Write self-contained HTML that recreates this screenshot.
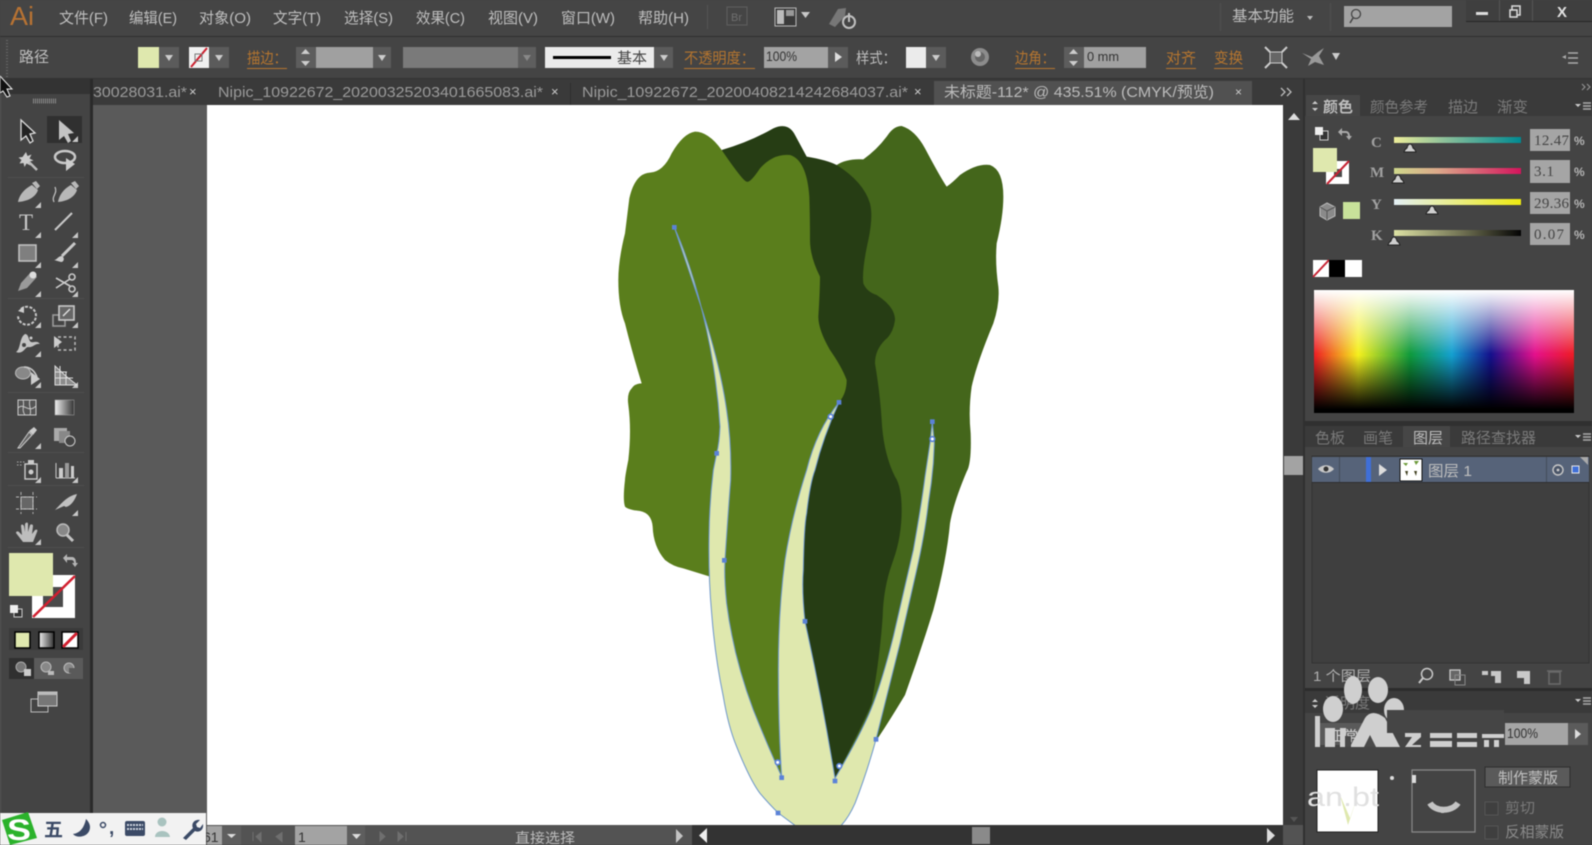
<!DOCTYPE html>
<html><head><meta charset="utf-8"><style>
html,body{margin:0;padding:0;background:#444;width:1592px;height:845px;overflow:hidden}
svg{display:block;filter:blur(.6px)}
text{font-family:"Liberation Sans","Noto Sans CJK SC",sans-serif}
.s{font-family:"Liberation Serif","Noto Serif CJK SC",serif}
.o{fill:#b5752f;font-size:15px}
.m{fill:#bfbfbf;font-size:15px}
.t{fill:#b4b4b4;font-size:15px}
.d{fill:#7a7a7a;font-size:15px}
.ic{fill:#c8c8c8}
.st{fill:none;stroke:#c8c8c8;stroke-width:1.6}
</style></head><body>
<svg width="1592" height="845" viewBox="0 0 1592 845" xmlns="http://www.w3.org/2000/svg">
<defs>
<linearGradient id="gc"><stop offset="0" stop-color="#eeee9a"/><stop offset=".4" stop-color="#8cc09a"/><stop offset="1" stop-color="#008a92"/></linearGradient>
<linearGradient id="gm"><stop offset="0" stop-color="#cfd88c"/><stop offset=".35" stop-color="#dca88a"/><stop offset="1" stop-color="#d4145c"/></linearGradient>
<linearGradient id="gy"><stop offset="0" stop-color="#e4f0f6"/><stop offset="1" stop-color="#eeea10"/></linearGradient>
<linearGradient id="gk"><stop offset="0" stop-color="#dde2a4"/><stop offset=".55" stop-color="#6d6e50"/><stop offset="1" stop-color="#040404"/></linearGradient>
<linearGradient id="hue"><stop offset="0" stop-color="#ee1c24"/><stop offset=".17" stop-color="#f5f01e"/><stop offset=".37" stop-color="#0f9a3c"/><stop offset=".53" stop-color="#14a0d0"/><stop offset=".68" stop-color="#14108c"/><stop offset=".85" stop-color="#e4108c"/><stop offset="1" stop-color="#ee1c24"/></linearGradient>
<linearGradient id="wb" x2="0" y2="1"><stop offset="0" stop-color="#fff"/><stop offset=".52" stop-color="#fff" stop-opacity="0"/><stop offset=".53" stop-color="#000" stop-opacity="0"/><stop offset=".97" stop-color="#000"/><stop offset="1" stop-color="#000"/></linearGradient>
<linearGradient id="gg"><stop offset="0" stop-color="#eee"/><stop offset="1" stop-color="#333"/></linearGradient>
<clipPath id="cv"><rect x="207" y="105" width="1076" height="720"/></clipPath>
</defs>

<rect width="1592" height="845" fill="#444"/>

<!-- menu bar -->
<rect width="1592" height="36" fill="#454545"/>
<rect y="36" width="1592" height="1" fill="#2f2f2f"/>
<text x="10" y="25" font-size="26" fill="#b87333" textLength="24" lengthAdjust="spacingAndGlyphs">Ai</text>
<text class="m" x="59" y="23" textLength="49" lengthAdjust="spacingAndGlyphs">文件(F)</text>
<text class="m" x="129" y="23" textLength="48" lengthAdjust="spacingAndGlyphs">编辑(E)</text>
<text class="m" x="199" y="23" textLength="52" lengthAdjust="spacingAndGlyphs">对象(O)</text>
<text class="m" x="273" y="23" textLength="48" lengthAdjust="spacingAndGlyphs">文字(T)</text>
<text class="m" x="344" y="23" textLength="49" lengthAdjust="spacingAndGlyphs">选择(S)</text>
<text class="m" x="416" y="23" textLength="49" lengthAdjust="spacingAndGlyphs">效果(C)</text>
<text class="m" x="488" y="23" textLength="50" lengthAdjust="spacingAndGlyphs">视图(V)</text>
<text class="m" x="561" y="23" textLength="54" lengthAdjust="spacingAndGlyphs">窗口(W)</text>
<text class="m" x="638" y="23" textLength="51" lengthAdjust="spacingAndGlyphs">帮助(H)</text>
<rect x="707" y="5" width="1" height="24" fill="#555"/>
<rect x="727" y="7" width="20" height="18" fill="none" stroke="#5f5f5f"/>
<text x="731" y="21" font-size="11" fill="#6f6f6f">Br</text>
<rect x="775" y="8" width="21" height="18" fill="#3a3a3a" stroke="#bbb"/>
<rect x="777" y="10" width="7" height="14" fill="#bbb"/><rect x="786" y="10" width="8" height="6" fill="#999"/>
<path d="M801 12h9l-4.500 6z" fill="#c8c8c8"/>
<path d="M829 24 L838 9 L846 8 L845 16 L835 27z" fill="#777"/>
<circle cx="849" cy="22" r="6" fill="none" stroke="#c0c0c0" stroke-width="2"/><rect x="848" y="13" width="2" height="9" fill="#c0c0c0"/>
<rect x="1220" y="3" width="1" height="28" fill="#505050"/>
<text class="m" x="1232" y="21" textLength="62" lengthAdjust="spacingAndGlyphs">基本功能</text>
<path d="M1307 16h6l-3 4z" fill="#bbb"/>
<rect x="1330" y="3" width="1" height="28" fill="#505050"/>
<rect x="1344" y="6" width="108" height="21" fill="#a3a3a3"/>
<circle cx="1356" cy="14" r="4.500" fill="none" stroke="#444" stroke-width="1.300"/><path d="M1353 18l-3 5" stroke="#444" stroke-width="1.500"/>
<rect x="1466" y="0" width="126" height="21" fill="#3f3f3f"/>
<rect x="1466" y="21" width="126" height="1" fill="#262626"/>
<rect x="1499" y="0" width="1" height="21" fill="#555"/><rect x="1532" y="0" width="1" height="21" fill="#555"/>
<rect x="1476" y="12" width="12" height="3" fill="#ddd"/>
<rect x="1512" y="6" width="8" height="9" fill="none" stroke="#ddd" stroke-width="1.500"/><rect x="1510" y="10" width="7" height="7" fill="#3f3f3f" stroke="#ddd" stroke-width="1.500"/>
<text x="1557" y="17" font-size="15" fill="#e2e2e2" font-weight="bold">X</text>

<!-- control bar -->
<rect y="37" width="1592" height="42" fill="#444"/>
<rect y="78" width="1592" height="1" fill="#333"/>
<path d="M7 40V78" stroke="#666" stroke-width="2" stroke-dasharray="1 2"/>
<text class="m" x="19" y="62" textLength="30" lengthAdjust="spacingAndGlyphs">路径</text>
<rect x="138" y="47" width="21" height="21" fill="#dfe8ae"/>
<rect x="159" y="47" width="20" height="21" fill="#5b5b5b"/><path d="M165 55h8l-4 6z" fill="#ccc"/>
<rect x="189" y="47" width="20" height="21" fill="#f0f0f0"/><path d="M191 67L207 48" stroke="#cc1f2e" stroke-width="2"/>
<rect x="195" y="54" width="7" height="7" fill="none" stroke="#777"/>
<rect x="209" y="47" width="20" height="21" fill="#5b5b5b"/><path d="M215 55h8l-4 6z" fill="#ccc"/>
<text class="o" x="247" y="63" textLength="40" lengthAdjust="spacingAndGlyphs">描边：</text><rect x="247" y="68" width="40" height="1" fill="#b5752f"/>
<rect x="296" y="47" width="20" height="21" fill="#5d5d5d"/><path d="M301 54h9l-4.500-5zM301 61h9l-4.500 5z" fill="#ccc"/>
<rect x="316" y="47" width="57" height="21" fill="#a0a0a0"/>
<rect x="373" y="47" width="18" height="21" fill="#5b5b5b"/><path d="M378 55h8l-4 6z" fill="#ccc"/>
<rect x="403" y="47" width="133" height="21" fill="#7a7a7a"/><rect x="518" y="47" width="18" height="21" fill="#5e5e5e"/><path d="M523 55h8l-4 6z" fill="#888"/>
<rect x="545" y="47" width="109" height="21" fill="#ebebeb"/>
<rect x="553" y="56" width="58" height="3" fill="#000"/>
<text x="617" y="63" font-size="15" fill="#444" textLength="30" lengthAdjust="spacingAndGlyphs">基本</text>
<rect x="654" y="47" width="19" height="21" fill="#5b5b5b"/><path d="M660 55h8l-4 6z" fill="#ccc"/>
<text class="o" x="684" y="63" textLength="71" lengthAdjust="spacingAndGlyphs">不透明度：</text><rect x="684" y="68" width="71" height="1" fill="#b5752f"/>
<rect x="764" y="47" width="64" height="21" fill="#a3a3a3"/><text x="766" y="61" font-size="14" fill="#333" textLength="31" lengthAdjust="spacingAndGlyphs">100%</text>
<rect x="828" y="47" width="20" height="21" fill="#5b5b5b"/><path d="M835 52v10l7-5z" fill="#ddd"/>
<text class="m" x="856" y="63" textLength="40" lengthAdjust="spacingAndGlyphs">样式：</text>
<rect x="906" y="47" width="20" height="21" fill="#ebebeb"/><rect x="926" y="47" width="20" height="21" fill="#5b5b5b"/><path d="M932 55h8l-4 6z" fill="#ccc"/>
<circle cx="980" cy="57" r="9" fill="#8c8c8c"/><circle cx="980" cy="57" r="5" fill="#666"/><circle cx="978" cy="54" r="3" fill="#bbb"/>
<text class="o" x="1015" y="63" textLength="40" lengthAdjust="spacingAndGlyphs">边角：</text><rect x="1015" y="68" width="40" height="1" fill="#b5752f"/>
<rect x="1064" y="47" width="20" height="21" fill="#5d5d5d"/><path d="M1069 54h9l-4.500-5zM1069 61h9l-4.500 5z" fill="#ccc"/>
<rect x="1084" y="47" width="62" height="21" fill="#a0a0a0"/><text x="1087" y="61" font-size="13" fill="#333" xml:space="preserve" textLength="32" lengthAdjust="spacingAndGlyphs">0 mm</text>
<text class="o" x="1166" y="63" textLength="30" lengthAdjust="spacingAndGlyphs">对齐</text><rect x="1166" y="68" width="30" height="1" fill="#b5752f"/>
<text class="o" x="1214" y="63" textLength="29" lengthAdjust="spacingAndGlyphs">变换</text><rect x="1214" y="68" width="29" height="1" fill="#b5752f"/>
<rect x="1270" y="52" width="12" height="11" fill="#666" stroke="#ccc"/><path d="M1265 47l5 5M1287 47l-5 5M1265 68l5-5M1287 68l-5-5" stroke="#ccc" stroke-width="2"/>
<path d="M1302 53l10 4 6-5 6-4-5 8 5 9-9-3-7 4 3-7z" fill="#999"/><path d="M1332 53h8l-4 7z" fill="#ccc"/>
<path d="M1568 53h10M1568 58h10M1568 63h10" stroke="#aaa" stroke-width="1.500"/><path d="M1562 57l4-2v4z" fill="#aaa"/>

<!-- tabs -->
<rect y="79" width="1592" height="26" fill="#3a3a3a"/>
<text x="93" y="97" font-size="15" fill="#9a9a9a" textLength="94" lengthAdjust="spacingAndGlyphs">30028031.ai*</text>
<text x="189" y="96" font-size="13" fill="#ccc">×</text>
<text x="218" y="97" font-size="15" fill="#9a9a9a" textLength="325" lengthAdjust="spacingAndGlyphs">Nipic_10922672_20200325203401665083.ai*</text>
<text x="551" y="96" font-size="13" fill="#ccc">×</text>
<rect x="570" y="83" width="1" height="22" fill="#2e2e2e"/>
<text x="582" y="97" font-size="15" fill="#9a9a9a" textLength="326" lengthAdjust="spacingAndGlyphs">Nipic_10922672_20200408214242684037.ai*</text>
<text x="914" y="96" font-size="13" fill="#ccc">×</text>
<rect x="934" y="81" width="318" height="24" fill="#515151"/>
<text x="944" y="97" font-size="15" fill="#bcbcbc" textLength="270" lengthAdjust="spacingAndGlyphs">未标题-112* @ 435.51% (CMYK/预览)</text>
<text x="1235" y="96" font-size="12" fill="#ccc">×</text>
<path d="M1281 88l4 4-4 4M1287 88l4 4-4 4" fill="none" stroke="#bbb" stroke-width="1.300"/>

<!-- toolbar -->
<rect x="0" y="79" width="90" height="15" fill="#333"/>
<rect x="0" y="94" width="90" height="731" fill="#444"/>
<rect x="90" y="79" width="3" height="746" fill="#2a2a2a"/>
<rect x="0" y="94" width="1" height="731" fill="#555"/>
<path d="M33 101h24" stroke="#8a8a8a" stroke-width="5" stroke-dasharray="1 1"/>
<rect x="47" y="116" width="35" height="27" fill="#303030"/>
<g fill="#4f4f4f"><rect x="8" y="177" width="76" height="1"/><rect x="8" y="298" width="76" height="1"/><rect x="8" y="392" width="76" height="1"/><rect x="8" y="452" width="76" height="1"/><rect x="8" y="485" width="76" height="1"/><rect x="8" y="547" width="76" height="1"/></g>
<g class="ic"><path d="M41 208h-6l6-6zM78 142h-6l6-6zM41 238h-6l6-6zM78 238h-6l6-6zM41 268h-6l6-6zM78 268h-6l6-6zM41 297h-6l6-6zM78 297h-6l6-6zM41 328h-6l6-6zM78 328h-6l6-6zM41 357h-6l6-6zM41 388h-6l6-6zM78 388h-6l6-6zM41 449h-6l6-6zM41 483h-6l6-6zM78 483h-6l6-6zM78 516h-6l6-6zM41 545h-6l6-6z"/></g>
<path d="M21 120V140L26 136L30 143L33 141L30 134L35 133Z" fill="#222" stroke="#ddd" stroke-width="1.300"/>
<path d="M59 120V140L64 136L68 143L71 141L68 134L74 133Z" fill="#c4c4c4"/>
<path d="M26 152l1.500 4 4-1.500-2 4 4 2-4 1 1 4-4-2-2 3.500-1-4-4 .5 2-3.500-3-2.500 4-.5z" fill="#ccc"/><path d="M29 162l8 8" stroke="#bbb" stroke-width="2.500"/>
<ellipse cx="65" cy="157" rx="10" ry="6" class="st" style="stroke-width:2.500"/><path d="M66 158v13l9-7z" fill="#ccc"/>
<path d="M18 202C20 192 28 187 32 185L38 190C36 196 30 201 18 202Z M32 183l4-2 4 5-3 3z" fill="#b8b8b8"/>
<path d="M58 202C60 192 67 187 71 185L77 190C75 196 69 201 58 202Z M71 183l4-2 4 5-3 3z" fill="#b8b8b8"/><path d="M54 202c-3-6 4-8 1-15" class="st" style="stroke-width:1.200"/>
<text class="s" x="19" y="230" font-size="23" fill="#c8c8c8">T</text>
<path d="M55 230L72 213" stroke="#c8c8c8" stroke-width="2"/>
<rect x="19" y="245" width="17" height="16" fill="#7f7f7f" stroke="#c4c4c4" stroke-width="1.500"/>
<path d="M75 243L62 256" stroke="#c8c8c8" stroke-width="3"/><path d="M54 260c3 0 4-4 8-4 3 2 2 6-1 6z" fill="#ccc"/>
<path d="M18 291l3-8 10-11 6 5-10 11z" fill="#9a9a9a"/><circle cx="33" cy="275" r="3.500" fill="#ddd"/>
<path d="M56 278l14 8M56 288l14-9" stroke="#ccc" stroke-width="1.600"/><circle cx="72" cy="277" r="3" class="st"/><circle cx="72" cy="289" r="3" class="st"/>
<path d="M21 309a9 9 0 1 1-3 7" class="st" style="stroke-width:2;stroke-dasharray:3 1.500"/><path d="M18 311l6-5v7z" fill="#ccc"/>
<rect x="53" y="315" width="12" height="11" fill="none" stroke="#9a9a9a" stroke-width="1.600"/><rect x="59" y="306" width="15" height="14" fill="#666" stroke="#c8c8c8" stroke-width="1.600"/><path d="M63 316l7-7" stroke="#ddd" stroke-width="1.500"/>
<path d="M16 352c5-3 3-14 9-18 4 0 3 6 6 8 3 1 6-2 9 2-5-1-7 4-12 3-3 0-5 8-12 5z" fill="#c4c4c4"/><circle cx="24" cy="345" r="2" fill="#444"/><circle cx="31" cy="338" r="1.500" fill="#ccc"/>
<rect x="58" y="337" width="17" height="13" fill="none" stroke="#bbb" stroke-width="1.500" stroke-dasharray="3 2.500"/><path d="M54 336v12l8-6z" fill="#ccc"/>
<ellipse cx="23" cy="373" rx="7.500" ry="6" fill="#888" stroke="#bbb"/><path d="M24 367c7 0 11 5 13 10" class="st"/><path d="M31 372v13l9-6z" fill="#ccc"/>
<path d="M55 366v19h22l-10-8z" fill="#8c8c8c" stroke="#ddd"/><path d="M55 372h12M55 378h18M60 366v19M66 372v13" stroke="#ddd"/>
<rect x="18" y="400" width="18" height="15" fill="#555" stroke="#ccc"/><path d="M18 408c6-6 10 6 18-2M23 400c2 5-2 10 2 15M30 400c-2 5 2 10 0 15" class="st" style="stroke-width:1"/>
<rect x="55" y="400" width="19" height="15" fill="url(#gg)" stroke="#aaa" stroke-width=".5"/>
<path d="M20 445l-2 3 2 0 12-13-3-3z" fill="#666" stroke="#ccc"/><path d="M29 431l5-4 3 3-4 5z" fill="#ccc"/>
<rect x="54" y="428" width="13" height="13" fill="#aaa"/><rect x="59" y="431" width="11" height="12" fill="#888"/><circle cx="70" cy="441" r="5" fill="#444" stroke="#ccc"/>
<rect x="25" y="464" width="12" height="15" fill="none" stroke="#ccc" stroke-width="1.400"/><circle cx="31" cy="472" r="2.500" fill="#ccc"/><rect x="28" y="460" width="6" height="4" fill="#ccc"/><path d="M17 462h8M17 465h6" stroke="#aaa" stroke-dasharray="1.500 1.500"/>
<path d="M56 478V463M56 478H75" stroke="#ccc"/><rect x="59" y="468" width="4" height="10" fill="#ccc"/><rect x="65" y="463" width="4" height="15" fill="#999"/><rect x="71" y="466" width="3" height="12" fill="#ccc"/>
<rect x="21" y="497" width="12" height="12" fill="#666" stroke="#ccc"/><path d="M16 497h21M16 509h21M21 492v22M33 492v22" stroke="#bbb" stroke-width=".9" stroke-dasharray="3 2"/>
<path d="M55 510c6-6 12-14 22-16-2 6-6 12-11 13l-2-1z" fill="#c0c0c0"/>
<path d="M23 542l-7-9c0-2 2-2 3-1l3 3-1-9c0-2 2-2 3 0l1 6v-8c1-2 3-2 3 0v8l2-7c1-1 3-1 3 1l-1 8 3-4c2-1 3 0 2 2l-4 10z" fill="#bdbdbd"/>
<circle cx="63" cy="530" r="6" fill="#888" stroke="#bbb" stroke-width="1.500"/><path d="M67 535l6 6" stroke="#c4c4c4" stroke-width="3"/>

<rect x="32" y="575" width="43" height="43" fill="#fff"/>
<rect x="43" y="587" width="20" height="20" fill="#4a4a4a"/>
<path d="M33 617L75 576" stroke="#d21f2f" stroke-width="2.500"/>
<rect x="9" y="553" width="44" height="43" fill="#dfe8ae"/>
<path d="M63 558l4-4v3h5c3 0 4 3 4 6h2l-3 4-3-4h2c0-2-1-3-3-3h-4v3z" fill="#b5b5b5"/>
<rect x="14" y="609" width="8" height="8" fill="#333" stroke="#ccc"/><rect x="10" y="605" width="8" height="8" fill="#eee"/>
<rect x="9" y="628" width="74" height="22" fill="#3a3a3a"/>
<rect x="15" y="632" width="15" height="16" fill="#dfe8ae" stroke="#000" stroke-width="1.500"/>
<rect x="39" y="632" width="15" height="16" fill="url(#gg)" stroke="#000" stroke-width="1.500"/>
<rect x="62" y="632" width="16" height="16" fill="#fff" stroke="#000" stroke-width="1.500"/><path d="M63 647L77 633" stroke="#d21f2f" stroke-width="3"/>
<rect x="9" y="658" width="25" height="21" fill="#303030"/><rect x="34" y="658" width="49" height="21" fill="#5a5a5a"/>
<circle cx="21" cy="667" r="5" fill="#777" stroke="#aaa"/><rect x="24" y="669" width="7" height="7" fill="#ccc"/>
<circle cx="46" cy="667" r="5" fill="#888" stroke="#bbb"/><rect x="48" y="671" width="6" height="4" fill="#bbb"/>
<circle cx="69" cy="668" r="5" fill="#888" stroke="#bbb"/><path d="M69 668h6v5h-6z" fill="#5a5a5a"/>
<rect x="31" y="699" width="17" height="13" fill="none" stroke="#bbb"/><rect x="38" y="692" width="19" height="14" fill="#777" stroke="#ccc"/><rect x="38" y="692" width="19" height="3" fill="#bbb"/>

<!-- canvas -->
<rect x="93" y="105" width="114" height="720" fill="#5a5a5a"/>
<rect x="207" y="105" width="1076" height="720" fill="#fff"/>
<g clip-path="url(#cv)"><g transform="translate(600 110) scale(.33333)">
<path fill="#44661b" d="M710 165Q740 145 790 148Q830 120 860 80Q880 48 905 48Q945 60 975 115Q1020 200 1040 230Q1055 220 1080 195Q1130 160 1170 165Q1210 180 1210 260Q1210 320 1190 400Q1185 460 1195 530Q1200 580 1180 640Q1130 760 1115 830Q1105 900 1112 970Q1115 1060 1100 1085Q1060 1180 1050 1240Q1040 1350 1000 1500Q960 1630 915 1755Q870 1830 830 1890L705 2005L700 600Z"/>
<path fill="#263d14" d="M365 120Q450 95 520 55Q565 35 585 75L620 140Q680 150 710 165Q790 215 810 280Q820 320 805 390Q785 480 790 520Q800 545 830 555Q885 590 885 630Q880 670 855 690Q825 720 825 760Q840 850 845 930Q850 1030 885 1100Q905 1130 905 1200Q905 1280 880 1350Q850 1430 848 1520Q840 1640 815 1780Q790 1840 705 2005L640 1780L580 1535L590 1200L500 500Z"/>
<path fill="#5a7e1c" d="M365 120Q325 65 285 65Q250 70 215 130Q190 185 150 188Q105 190 88 265Q80 330 75 370Q55 450 55 510Q55 590 75 640Q100 740 125 820Q105 820 95 835Q80 850 85 885Q95 960 85 1050Q75 1100 75 1110Q68 1170 75 1190Q85 1200 120 1203Q155 1210 158 1250Q160 1310 195 1350Q220 1370 250 1375L330 1400L395 1700L460 1900L545 2010L580 1780L575 1480L590 1300L630 1080L717 877Q740 850 740 810Q725 770 690 720Q655 660 655 620Q660 540 660 500Q630 440 630 390Q630 320 628 260Q620 150 570 135Q520 130 480 175Q450 220 440 215Q430 215 365 120Z"/>
<path fill="#dfe8ae" stroke="#6d97cc" stroke-width="3" stroke-linejoin="round" d="M223 352C280 480 345 700 360 950Q358 1000 350 1030L340 1080Q328 1180 327 1280Q325 1400 335 1510Q345 1640 370 1760Q385 1850 410 1910Q450 2010 480 2050Q510 2085 535 2109L590 2150L720 2150Q745 2125 765 2080Q800 1990 828 1888Q860 1760 900 1600Q925 1490 950 1380Q975 1270 985 1180Q995 1120 1000 1060L1003 1000L997 935L990 1000L975 1100Q965 1180 940 1320Q915 1430 880 1580Q850 1700 820 1780Q790 1860 705 2005Q665 1760 615 1535Q605 1440 610 1380Q612 1250 620 1210Q630 1120 645 1080Q670 980 717 877Q650 960 620 1080Q575 1220 555 1350Q535 1500 535 1680Q535 1850 545 2000Q500 1900 460 1800Q400 1640 380 1480Q372 1400 375 1350Q385 1200 392 1110Q395 1000 380 900Q360 760 300 580Q260 460 223 352Z"/>
<g fill="#5b82d8"><rect x="216" y="345" width="14" height="14"/><rect x="710" y="870" width="14" height="14"/><rect x="990" y="928" width="14" height="14"/><rect x="343" y="1023" width="14" height="14"/><rect x="366" y="1344" width="14" height="14"/><rect x="608" y="1527" width="14" height="14"/><rect x="538" y="1996" width="14" height="14"/><rect x="698" y="2006" width="14" height="14"/><rect x="821" y="1881" width="14" height="14"/><rect x="527" y="2102" width="14" height="14"/></g>
<g fill="#fff" stroke="#5b82d8" stroke-width="5"><circle cx="692" cy="920" r="7"/><circle cx="997" cy="987" r="7"/><circle cx="533" cy="1957" r="7"/><circle cx="718" cy="1968" r="7"/></g>
</g></g>

<!-- status bar -->
<rect x="206" y="825" width="486" height="20" fill="#535353"/>
<rect x="207" y="826" width="15" height="19" fill="#a3a3a3"/><text x="203" y="842" font-size="14" fill="#333">61</text>
<rect x="222" y="826" width="19" height="19" fill="#5e5e5e"/><path d="M227 834h9l-4.500 4z" fill="#ddd"/>
<path d="M253 832v9M256 836.500l5-4v9zM276 836.500l6-4v9z" fill="#6f6f6f" stroke="#6f6f6f"/>
<rect x="295" y="826" width="52" height="19" fill="#a3a3a3"/><text x="298" y="842" font-size="14" fill="#333">1</text>
<rect x="347" y="826" width="18" height="19" fill="#5e5e5e"/><path d="M352 834h9l-4.500 5z" fill="#ddd"/>
<path d="M380 832v9l5-4.500zM398 832v9l5-4.500zM406 832v9" fill="#6f6f6f" stroke="#6f6f6f"/>
<text x="515" y="843" font-size="14" fill="#bcbcbc" textLength="60" lengthAdjust="spacingAndGlyphs">直接选择</text>
<path d="M676 829v14l7-7z" fill="#c4c4c4"/>
<rect x="692" y="825" width="591" height="20" fill="#333"/>
<path d="M707 828v15l-8-7.500z" fill="#eee"/>
<rect x="972" y="827" width="18" height="17" fill="#8a8a8a"/>
<path d="M1267 828v15l8-7.500z" fill="#ddd"/>
<rect x="1283" y="825" width="22" height="20" fill="#535353"/>

<!-- v scrollbar -->
<rect x="1283" y="105" width="20" height="720" fill="#3a3a3a"/>
<rect x="1303" y="79" width="2" height="766" fill="#303030"/>
<path d="M1288 120h12l-6-7z" fill="#ddd"/>
<rect x="1284" y="456" width="19" height="19" fill="#a3a3a3"/>
<path d="M1290 817h8l-4 5z" fill="#555"/>

<!-- right panel -->
<rect x="1305" y="79" width="287" height="766" fill="#444"/>
<rect x="1305" y="79" width="287" height="37" fill="#3a3a3a"/>
<path d="M1582 84l3 3-3 3M1587 84l3 3-3 3" fill="none" stroke="#999"/>
<rect x="1306" y="95" width="54" height="21" fill="#464646"/>
<path d="M1312 104l3-3 3 3zM1312 108l3 3 3-3z" fill="#ccc"/>
<text x="1323" y="112" class="m" textLength="30" lengthAdjust="spacingAndGlyphs" font-weight="bold">颜色</text>
<text x="1370" y="112" class="d" textLength="58" lengthAdjust="spacingAndGlyphs">颜色参考</text>
<text x="1448" y="112" class="d" textLength="30" lengthAdjust="spacingAndGlyphs">描边</text>
<text x="1497" y="112" class="d" textLength="31" lengthAdjust="spacingAndGlyphs">渐变</text>
<path d="M1575 104h6l-3 3z" fill="#ccc"/><path d="M1583 103h8M1583 106h8M1583 109h8" stroke="#aaa" stroke-width="1.500"/>

<rect x="1320" y="131" width="8" height="9" fill="#333" stroke="#ccc"/><rect x="1315" y="127" width="8" height="8" fill="#eee"/>
<path d="M1338 132l4-4v3h4c2 0 4 2 4 5h2l-3 4-3-4h2c0-2-1-3-2-3h-4v3z" fill="#aaa"/>
<rect x="1326" y="161" width="23" height="23" fill="#fff"/><rect x="1334" y="169" width="8" height="8" fill="#4a4a4a"/>
<path d="M1327 184L1349 161" stroke="#c62333" stroke-width="2"/>
<rect x="1313" y="148" width="24" height="24" fill="#dfe8ae"/>
<path d="M1327 203l8 4v9l-8 4-7-4v-9z" fill="#8a8a8a" stroke="#bbb"/><path d="M1320 207l7 4 8-4M1327 211v9" fill="none" stroke="#555"/>
<rect x="1343" y="202" width="17" height="17" fill="#c8e29a"/>

<g font-size="15" fill="#a0a0a0" font-weight="bold">
<text class="s" x="1371" y="147">C</text><text class="s" x="1370" y="177">M</text><text class="s" x="1371" y="209">Y</text><text class="s" x="1371" y="240">K</text></g>
<rect x="1394" y="137" width="127" height="6" fill="url(#gc)"/>
<rect x="1394" y="168" width="127" height="6" fill="url(#gm)"/>
<rect x="1394" y="199" width="127" height="6" fill="url(#gy)"/>
<rect x="1394" y="230" width="127" height="6" fill="url(#gk)"/>
<g fill="#cfcfcf" stroke="#222"><path d="M1404 152q1-3 3-4 1-4 3-4t3 4q2 1 3 4z"/><path d="M1392 183q1-3 3-4 1-4 3-4t3 4q2 1 3 4z"/><path d="M1426 214q1-3 3-4 1-4 3-4t3 4q2 1 3 4z"/><path d="M1388 245q1-3 3-4 1-4 3-4t3 4q2 1 3 4z"/></g>
<g fill="#a5a5a5"><rect x="1530" y="129" width="40" height="22"/><rect x="1530" y="160" width="40" height="23"/><rect x="1530" y="192" width="40" height="22"/><rect x="1530" y="223" width="40" height="22"/></g>
<g font-size="15" fill="#444"><text class="s" x="1534" y="145" textLength="35">12.47</text><text class="s" x="1534" y="176" textLength="20">3.1</text><text class="s" x="1534" y="208" textLength="35">29.36</text><text class="s" x="1534" y="239" textLength="30">0.07</text></g>
<g font-size="12" fill="#b5b5b5" font-weight="bold"><text x="1574" y="145">%</text><text x="1574" y="176">%</text><text x="1574" y="208">%</text><text x="1574" y="239">%</text></g>
<rect x="1313" y="260" width="16" height="17" fill="#fff"/><path d="M1313 277L1329 260" stroke="#c62333" stroke-width="2"/>
<rect x="1329" y="260" width="16" height="17" fill="#000"/><rect x="1345" y="260" width="17" height="17" fill="#fff"/>
<rect x="1314" y="290" width="260" height="123" fill="url(#hue)"/>
<rect x="1314" y="290" width="260" height="123" fill="url(#wb)"/>
<rect x="1305" y="421" width="287" height="5" fill="#303030"/>

<!-- layers panel -->
<rect x="1305" y="426" width="287" height="21" fill="#3a3a3a"/>
<rect x="1403" y="426" width="47" height="21" fill="#464646"/>
<text x="1315" y="443" class="d" textLength="30" lengthAdjust="spacingAndGlyphs">色板</text>
<text x="1363" y="443" class="d" textLength="30" lengthAdjust="spacingAndGlyphs">画笔</text>
<text x="1413" y="443" class="m" textLength="30" lengthAdjust="spacingAndGlyphs">图层</text>
<text x="1461" y="443" class="d" textLength="75" lengthAdjust="spacingAndGlyphs">路径查找器</text>
<path d="M1575 435h6l-3 3z" fill="#ccc"/><path d="M1583 434h8M1583 437h8M1583 440h8" stroke="#aaa" stroke-width="1.500"/>
<rect x="1312" y="456" width="277" height="207" fill="#3f3f3f" stroke="#333"/>
<rect x="1312" y="457" width="277" height="25" fill="#566379"/>
<rect x="1312" y="482" width="277" height="1" fill="#2e2e2e"/>
<rect x="1339" y="457" width="1" height="25" fill="#434c5b"/><rect x="1546" y="457" width="1" height="25" fill="#434c5b"/>
<path d="M1318 469c4-5 12-5 16 0-4 5-12 5-16 0z" fill="#c8c8c8"/><circle cx="1326" cy="469" r="2.500" fill="#333"/>
<rect x="1366" y="457" width="5" height="25" fill="#3f6fd8"/>
<path d="M1379 464v12l8-6z" fill="#ddd"/>
<rect x="1400" y="459" width="22" height="22" fill="#fff" stroke="#111"/>
<path d="M1403 463h5l-2 3zM1414 461h5l-3 4z" fill="#6c9a3a"/><path d="M1405 471h3l-1 5zM1414 471h3l-1 5z" fill="#3f3f1f"/>
<text x="1428" y="476" class="m" textLength="44" lengthAdjust="spacingAndGlyphs">图层 1</text>
<circle cx="1558" cy="470" r="5" fill="#4a5568" stroke="#c8c8c8" stroke-width="1.400"/><circle cx="1558" cy="470" r="1.400" fill="#ccc"/>
<rect x="1572" y="466" width="7" height="7" fill="#3f6fd8" stroke="#e8e8e8"/>
<path d="M1580 457h8v8z" fill="#aaa"/>
<text x="1313" y="681" font-size="14" fill="#b0b0b0" textLength="58" lengthAdjust="spacingAndGlyphs">1 个图层</text>
<circle cx="1427" cy="674" r="5.500" fill="none" stroke="#c8c8c8" stroke-width="1.500"/><path d="M1423 678l-4 5" stroke="#c8c8c8" stroke-width="2"/>
<rect x="1450" y="670" width="10" height="10" fill="#666" stroke="#c8c8c8" stroke-width="1.300"/><rect x="1455" y="675" width="10" height="10" fill="none" stroke="#888"/>
<path d="M1482 671h6v4h-6zM1491 671h10v12h-6v-7h-4z" fill="#c8c8c8"/>
<path d="M1517 671h13v13h-6v-6h-7z" fill="#c8c8c8"/>
<rect x="1549" y="672" width="11" height="12" fill="none" stroke="#6a6a6a" stroke-width="1.500"/><path d="M1547 671h15" stroke="#6a6a6a" stroke-width="1.500"/>
<rect x="1305" y="688" width="287" height="3" fill="#2c2c2c"/>

<!-- transparency panel -->
<rect x="1305" y="691" width="287" height="22" fill="#3a3a3a"/>
<path d="M1312 702l3-3 3 3zM1312 705l3 3 3-3z" fill="#ccc"/>
<text x="1325" y="708" class="d" textLength="45" lengthAdjust="spacingAndGlyphs">透明度</text>
<path d="M1575 699h6l-3 3z" fill="#ccc"/><path d="M1583 698h8M1583 701h8M1583 704h8" stroke="#aaa" stroke-width="1.500"/>
<rect x="1315" y="723" width="70" height="22" fill="#5a5a5a"/>
<text x="1330" y="741" font-size="14" fill="#ddd" textLength="28" lengthAdjust="spacingAndGlyphs">正常</text>
<rect x="1505" y="723" width="63" height="22" fill="#a5a5a5"/><text x="1507" y="738" font-size="14" fill="#333" textLength="31" lengthAdjust="spacingAndGlyphs">100%</text>
<rect x="1568" y="723" width="20" height="22" fill="#5b5b5b"/><path d="M1575 729v10l6-5z" fill="#ddd"/>
<!-- watermark -->
<g fill="#cfcfcf"><ellipse cx="1353" cy="690" rx="9" ry="14"/><ellipse cx="1378" cy="690" rx="10" ry="13"/><ellipse cx="1333" cy="709" rx="10" ry="13"/><ellipse cx="1394" cy="710" rx="10" ry="12"/></g>
<path d="M1350 747L1365 718Q1372 708 1385 718L1400 747Z" fill="#cfcfcf"/>
<rect x="1387" y="710" width="117" height="23" fill="#454545"/>
<g fill="#cfcfcf"><rect x="1315" y="716" width="5" height="31"/><rect x="1325" y="728" width="10" height="19"/><rect x="1340" y="728" width="6" height="19"/><rect x="1405" y="733" width="16" height="4"/><path d="M1412 737h9l-9 8h9v2h-16z"/><rect x="1430" y="733" width="22" height="5"/><rect x="1430" y="741" width="22" height="6"/><rect x="1457" y="733" width="20" height="5"/><rect x="1457" y="742" width="20" height="5"/><rect x="1482" y="734" width="22" height="4"/><rect x="1484" y="740" width="5" height="7"/><rect x="1494" y="740" width="5" height="7"/></g>
<path d="M1370 735l-6 12h12z" fill="#4a4a4a"/>
<rect x="1345" y="736" width="6" height="11" fill="#4a4a4a"/>
<!-- mask row -->
<rect x="1317" y="770" width="61" height="62" fill="#fff" stroke="#222"/>
<path d="M1340 795L1348 825L1358 795L1350 818z" fill="#dfe8ae"/>
<text x="1307" y="806" font-size="27" fill="#e0e0e0" textLength="72" lengthAdjust="spacingAndGlyphs">an.bt</text>
<circle cx="1392" cy="778" r="2" fill="#ddd"/>
<path d="M1412 770h63v62h-63z" fill="none" stroke="#8a8a8a" stroke-width="1.200"/>
<rect x="1412" y="775" width="4" height="8" fill="#ddd"/>
<path d="M1430 803c5 9 22 9 28 0M1444 810l-3 0" fill="none" stroke="#c4c4c4" stroke-width="6"/>
<rect x="1485" y="767" width="85" height="20" fill="#5a5a5a" stroke="#2e2e2e"/>
<text x="1498" y="783" font-size="15" fill="#c0c0c0" textLength="60" lengthAdjust="spacingAndGlyphs">制作蒙版</text>
<rect x="1485" y="802" width="13" height="13" fill="#3f3f3f" stroke="#555"/><rect x="1485" y="826" width="13" height="13" fill="#3f3f3f" stroke="#555"/>
<text x="1505" y="813" font-size="14" fill="#7a7a7a" textLength="30" lengthAdjust="spacingAndGlyphs">剪切</text>
<text x="1505" y="837" font-size="15" fill="#8a8a8a" textLength="59" lengthAdjust="spacingAndGlyphs">反相蒙版</text>

<!-- IME bar -->
<rect x="0" y="813" width="206" height="32" fill="#f2f2f2"/>
<path d="M2 820L28 812L37 838L10 845Z" fill="#2bb22b"/>
<text x="7" y="840" font-size="30" font-weight="bold" fill="#fff" textLength="24" lengthAdjust="spacingAndGlyphs">S</text>
<text x="44" y="836" font-size="19" fill="#3b4a66" font-weight="bold">五</text>
<path d="M86 819c-2 9-6 14-13 15 4 5 17 3 17-7 0-3-2-6-4-8z" fill="#3b4a66"/>
<circle cx="103" cy="825" r="2.500" fill="none" stroke="#3b4a66" stroke-width="1.500"/><text x="109" y="834" font-size="19" font-weight="bold" fill="#3b4a66">,</text>
<rect x="125" y="821" width="20" height="15" rx="2" fill="#3b4a66"/><path d="M127 825h16M127 829h16" stroke="#cfd6e0" stroke-dasharray="2 1" stroke-width="2"/>
<circle cx="162" cy="822" r="4.500" fill="#a9c3bf"/><path d="M155 837c0-8 14-8 15 0z" fill="#a9c3bf"/>
<path d="M183 838l10-10c-2-4 1-9 7-8l-4 4 1 3 3 1 3-4c1 6-4 9-8 7l-9 9z" fill="#3b4a66"/>

<!-- mouse cursor -->
<path d="M0 76L12 89L7 89L10 96L7 97L3 91L0 93Z" fill="#111" stroke="#eee"/>
</svg>
</body></html>
